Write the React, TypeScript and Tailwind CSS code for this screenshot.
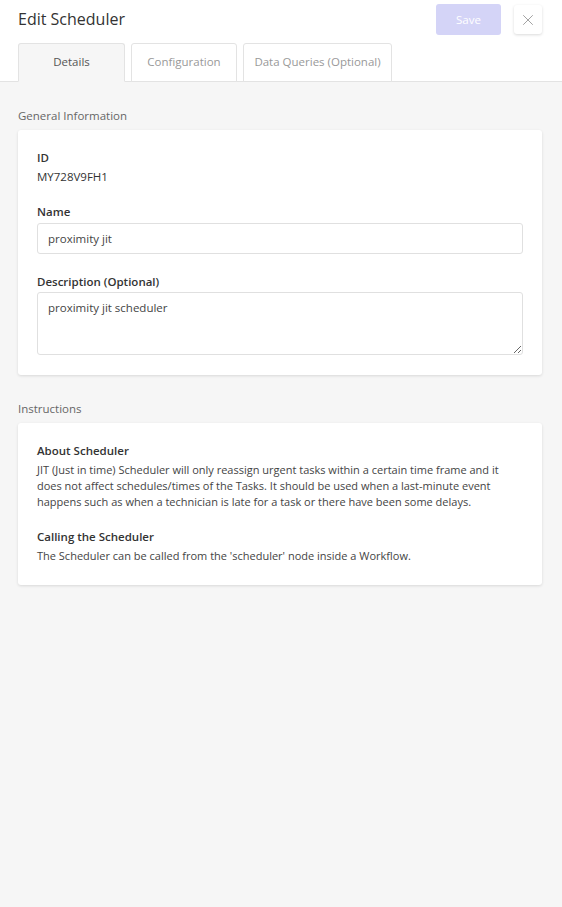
import { X } from 'lucide-react';

const TABS = ['Details', 'Configuration', 'Data Queries (Optional)'];

function Label({ children }: { children: React.ReactNode }) {
  return <div className="text-[11.5px] font-semibold text-[#333] leading-[16px]">{children}</div>;
}

export default function App() {
  return (
    <div className="min-h-[907px] bg-[#f6f6f6] text-[#333]" style={{ fontFamily: '"Open Sans", sans-serif' }}>
      <div className="bg-white border-b border-[#e3e3e3]">
        <div className="flex items-center justify-between pl-[18px] pr-[20px] pt-[4px]">
          <h1 className="text-[16px] text-[#333] leading-[31px]">Edit Scheduler</h1>
          <div className="flex items-center gap-[13px]">
            <button className="w-[65px] h-[31px] rounded-[3px] bg-[#d4d4f7] text-white text-[11.5px]">Save</button>
            <button className="w-[28px] h-[29px] rounded-[3px] bg-white shadow-[0_1px_3px_rgba(0,0,0,0.15)] flex items-center justify-center text-[#999]">
              <X className="w-[18px] h-[18px]" strokeWidth={1.2} />
            </button>
          </div>
        </div>
        <div className="flex pl-[18px] mt-[8px] gap-[6px] -mb-px">
          {TABS.map((t, i) => (
            <div
              key={t}
              className={`h-[39px] pb-[2px] flex items-center justify-center text-[11.5px] border border-[#e3e3e3] rounded-t-[3px] ${
                i === 0
                  ? 'w-[107px] bg-[#f6f6f6] border-b-[#f6f6f6] text-[#555]'
                  : i === 1
                    ? 'w-[106px] bg-white text-[#999]'
                    : 'w-[149px] bg-white text-[#999]'
              }`}
            >
              {t}
            </div>
          ))}
        </div>
      </div>

      <div className="px-[18px] pt-[26px] pr-[20px]">
        <div className="text-[11.5px] text-[#666] leading-[16px] mb-[6px]">General Information</div>
        <div className="bg-white rounded-[3px] shadow-[0_1px_3px_rgba(0,0,0,0.12)] px-[19px] pt-[20px] pb-[20px]">
          <Label>ID</Label>
          <div className="text-[11.5px] leading-[16px] mt-[3px] text-[#333]">MY728V9FH1</div>
          <div className="mt-[19px]">
            <Label>Name</Label>
            <input
              readOnly
              value="proximity jit"
              className="mt-[3px] w-full h-[31px] border border-[#e0e0e0] rounded-[3px] px-[10px] text-[11.5px] text-[#444] outline-none"
            />
          </div>
          <div className="mt-[20px]">
            <Label>Description (Optional)</Label>
            <textarea
              readOnly
              value="proximity jit scheduler"
              className="block mt-[2px] w-full h-[63px] border border-[#e0e0e0] rounded-[3px] px-[10px] py-[6px] text-[11.5px] text-[#444] outline-none"
            />
          </div>
        </div>

        <div className="text-[11.5px] text-[#666] leading-[16px] mt-[26px] mb-[6px]">Instructions</div>
        <div className="bg-white rounded-[3px] shadow-[0_1px_3px_rgba(0,0,0,0.12)] px-[19px] pt-[20px] pb-[21px] text-[11px] leading-[16px]">
          <Label>About Scheduler</Label>
          <p className="mt-[3px] text-[#444]">
            JIT (Just in time) Scheduler will only reassign urgent tasks within a certain time frame and it does not affect
            schedules/times of the Tasks. It should be used when a last-minute event happens such as when a technician is late
            for a task or there have been some delays.
          </p>
          <div className="mt-[19px]">
            <Label>Calling the Scheduler</Label>
          </div>
          <p className="mt-[3px] text-[#444]">The Scheduler can be called from the 'scheduler' node inside a Workflow.</p>
        </div>
      </div>
    </div>
  );
}
